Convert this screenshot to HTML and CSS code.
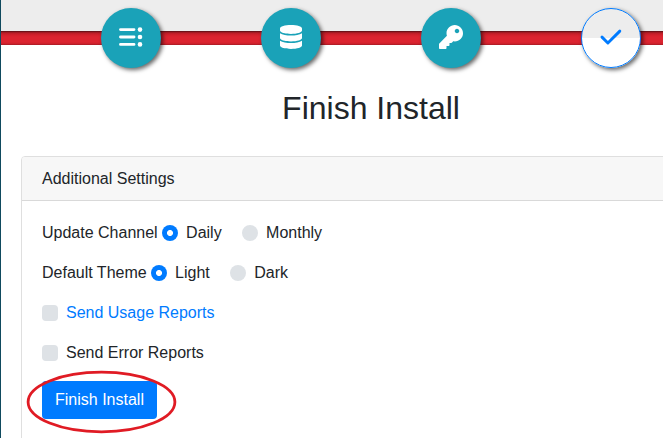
FILE: index.html
```
<!DOCTYPE html>
<html lang="en">
<head>
<meta charset="utf-8">
<title>Finish Install</title>
<link rel="stylesheet" href="styles.css">
</head>
<body>
<main class="page">
  <nav class="steps">
    <div class="step done">
      <svg width="24" height="20" viewBox="0 0 24 20" fill="currentColor"><path d="M1.5 2.6H15M1.5 10H15M1.5 17.4H15" stroke="currentColor" stroke-width="2.9" stroke-linecap="round"/><circle cx="21" cy="2.6" r="2.3"/><circle cx="21" cy="10" r="2.3"/><circle cx="21" cy="17.4" r="2.3"/></svg>
    </div>
    <div class="step done">
      <svg width="22" height="24" viewBox="0 0 448 512" preserveAspectRatio="none" fill="currentColor"><path d="M448 73.143v45.714C448 159.143 347.667 192 224 192S0 159.143 0 118.857V73.143C0 32.857 100.333 0 224 0s224 32.857 224 73.143zM448 176v102.857C448 319.143 347.667 352 224 352S0 319.143 0 278.857V176c48.125 33.143 136.208 48.572 224 48.572S399.874 209.143 448 176zm0 160v102.857C448 479.143 347.667 512 224 512S0 479.143 0 438.857V336c48.125 33.143 136.208 48.572 224 48.572S399.874 369.143 448 336z"/></svg>
    </div>
    <div class="step done">
      <svg width="24" height="24" viewBox="0 0 512 512" fill="currentColor"><path d="M512 176.001C512 273.203 433.202 352 336 352c-11.22 0-22.19-1.062-32.827-3.069l-24.012 27.014A23.999 23.999 0 0 1 261.223 384H224v40c0 13.255-10.745 24-24 24h-40v40c0 13.255-10.745 24-24 24H24c-13.255 0-24-10.745-24-24v-78.059c0-6.365 2.529-12.47 7.029-16.971l161.802-161.802C163.108 213.814 160 195.271 160 176 160 78.798 238.797.001 335.999 0 433.488-.001 512 78.511 512 176.001zM336 128c0 26.51 21.49 48 48 48s48-21.49 48-48-21.49-48-48-48-48 21.49-48 48z"/></svg>
    </div>
    <div class="step current">
      <svg width="24" height="24" viewBox="0 0 24 24" fill="none" stroke="currentColor" stroke-width="2.9" stroke-linecap="round" stroke-linejoin="round"><path d="M3 12.1L8.9 18L20.8 6.1"/></svg>
    </div>
  </nav>
  <h2 class="title">Finish Install</h2>
  <section class="card">
    <header class="card-header">Additional Settings</header>
    <form class="card-body">
      <div class="row">
        <span class="label">Update Channel</span>
        <label class="option"><span class="radio checked"></span>Daily</label>
        <label class="option"><span class="radio"></span>Monthly</label>
      </div>
      <div class="row">
        <span class="label">Default Theme</span>
        <label class="option"><span class="radio checked"></span>Light</label>
        <label class="option"><span class="radio"></span>Dark</label>
      </div>
      <div class="row">
        <label class="option link"><span class="checkbox"></span>Send Usage Reports</label>
      </div>
      <div class="row">
        <label class="option"><span class="checkbox"></span>Send Error Reports</label>
      </div>
      <div class="submit">
        <button class="button" type="button">Finish Install</button>
        <svg class="highlight" width="152" height="64" viewBox="0 0 152 64" fill="none"><ellipse cx="76.5" cy="32" rx="73.4" ry="29.8" stroke="#e01b24" stroke-width="2.8"/></svg>
      </div>
    </form>
  </section>
</main>
</body>
</html>
```
FILE: styles.css
```
* {
  box-sizing: border-box;
}

body {
  margin: 0;
  height: 438px;
  overflow: hidden;
  background: #fff;
  color: #212529;
  font: 16px/24px "Liberation Sans", Arial, sans-serif;
}

.page {
  width: 741px;
  height: 438px;
  border-left: 1px solid #0f4a5e;
}

.steps {
  display: flex;
  gap: 100px;
  height: 76px;
  padding: 8px 0 0 100px;
  background:
    linear-gradient(#4c0d12 0, #8f1820 1px, #b91d27 2px, #d3202c 4px, #dc2430 6px, #dc2430 11px, #c9202b 13px, #9e1923 14px) 0 31px / 100% 14px no-repeat,
    linear-gradient(#ededed, #ededed) 0 0 / 100% 31px no-repeat;
}

.step {
  display: flex;
  flex: none;
  align-items: center;
  justify-content: center;
  width: 60px;
  height: 60px;
  padding-bottom: 2px;
  border-radius: 50%;
  box-shadow: 2px 2px 4px rgba(0, 0, 0, 0.6);
}

.done {
  background: #1aa2b8;
  color: #fff;
}

.current {
  border: 1px solid #007bff;
  background: linear-gradient(#ededed 50%, #fff 50%);
  color: #007bff;
}

.title {
  margin: 13px 0 0;
  font-size: 32px;
  font-weight: 400;
  line-height: 38px;
  text-align: center;
}

.card {
  margin: 29px 20px 0;
  height: 320px;
  border: 1px solid #dfdfdf;
  border-radius: 4px;
}

.card-header {
  height: 44px;
  padding: 10px 20px;
  border-bottom: 1px solid #d9d9d9;
  border-radius: 3px 3px 0 0;
  background: #f7f7f7;
}

.card-body {
  padding: 20px;
}

.row {
  display: flex;
  height: 24px;
  margin-bottom: 16px;
}

.label {
  margin-right: 4.45px;
}

.option {
  display: flex;
  align-items: center;
  margin-right: 20.45px;
}

.radio,
.checkbox {
  width: 16px;
  height: 16px;
  margin-right: 8px;
  background: #dee2e6;
}

.radio {
  border-radius: 50%;
}

.checked {
  background: radial-gradient(circle, #fff 2.6px, #007bff 3.4px);
}

.checkbox {
  border-radius: 4px;
}

.link {
  color: #007bff;
}

.submit {
  position: relative;
  width: 115px;
}

.button {
  display: block;
  width: 115px;
  height: 38px;
  padding: 0;
  border: 0;
  border-radius: 4px;
  background: #007bff;
  color: #fff;
  font: inherit;
}

.highlight {
  position: absolute;
  top: -11px;
  left: -17px;
}
```
